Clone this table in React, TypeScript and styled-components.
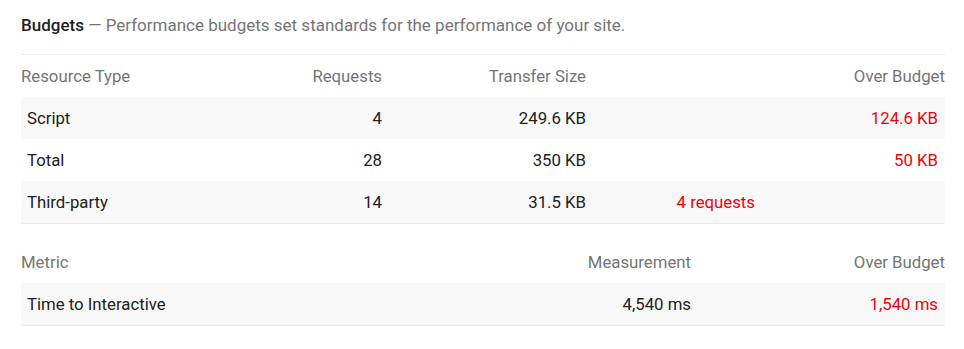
import { ReactElement } from 'react';
import styled, { createGlobalStyle } from 'styled-components';

const GlobalStyle = createGlobalStyle`
    body {
        margin: 0;
        background: #fff;
        font-family: Roboto, 'Liberation Sans', Arial, sans-serif;
        -webkit-font-smoothing: antialiased;
    }
`;

const Section = styled.div`
    width: 924px;
    padding: 13px 19px 0 21px;
`;

const Title = styled.div`
    font-size: 17px;
    line-height: 24px;
    color: #757575;
    padding-bottom: 17px;
    border-bottom: 1px solid #ebebeb;

    strong {
        font-weight: 500;
        color: #212121;
    }
`;

const Table = styled.table`
    width: 100%;
    border-collapse: collapse;
    table-layout: fixed;
    font-size: 16.75px;
    line-height: 24px;

    & + & {
        margin-top: 17px;
    }
`;

type Align = 'left' | 'right';

const HeadCell = styled.th<{ $align: Align }>`
    height: 42px;
    padding: 0 8px;
    font-weight: 400;
    color: #757575;
    text-align: ${(p) => p.$align};
    white-space: nowrap;

    &:first-child {
        padding-left: 0;
    }
    &:last-child {
        padding-right: 0;
    }
`;

const Row = styled.tr`
    &:nth-child(odd) {
        background-color: #f8f8f8;
    }
    &:last-child {
        border-bottom: 1px solid #ebebeb;
    }
`;

const Cell = styled.td<{ $align: Align; $over?: boolean }>`
    height: 42px;
    padding: 0 8px;
    color: ${(p) => (p.$over ? '#f0000a' : '#212121')};
    text-align: ${(p) => p.$align};
    white-space: nowrap;

    &:first-child {
        padding-left: 6px;
    }
    &:last-child {
        padding-right: 7px;
    }
`;

interface Column {
    label: string;
    width: number;
    align: Align;
    over?: boolean;
}

const resourceColumns: Column[] = [
    { label: 'Resource Type', width: 179, align: 'left' },
    { label: 'Requests', width: 190, align: 'right' },
    { label: 'Transfer Size', width: 204, align: 'right' },
    { label: '', width: 169, align: 'right', over: true },
    { label: 'Over Budget', width: 182, align: 'right', over: true },
];

const resourceRows = [
    ['Script', '4', '249.6 KB', '', '124.6 KB'],
    ['Total', '28', '350 KB', '', '50 KB'],
    ['Third-party', '14', '31.5 KB', '4 requests', ''],
];

const metricColumns: Column[] = [
    { label: 'Metric', width: 470, align: 'left' },
    { label: 'Measurement', width: 208, align: 'right' },
    { label: 'Over Budget', width: 246, align: 'right', over: true },
];

const metricRows = [['Time to Interactive', '4,540 ms', '1,540 ms']];

function BudgetTable({ columns, rows }: { columns: Column[]; rows: string[][] }): ReactElement {
    return (
        <Table>
            <colgroup>
                {columns.map((c, i) => (
                    <col key={i} style={{ width: c.width }} />
                ))}
            </colgroup>
            <thead>
                <tr>
                    {columns.map((c, i) => (
                        <HeadCell key={i} $align={c.align}>
                            {c.label}
                        </HeadCell>
                    ))}
                </tr>
            </thead>
            <tbody>
                {rows.map((row, r) => (
                    <Row key={r}>
                        {row.map((value, i) => (
                            <Cell key={i} $align={columns[i].align} $over={columns[i].over}>
                                {value}
                            </Cell>
                        ))}
                    </Row>
                ))}
            </tbody>
        </Table>
    );
}

function App(): ReactElement {
    return (
        <>
            <GlobalStyle />
            <Section>
                <Title>
                    <strong>Budgets</strong> — Performance budgets set standards for the performance of your site.
                </Title>
                <BudgetTable columns={resourceColumns} rows={resourceRows} />
                <BudgetTable columns={metricColumns} rows={metricRows} />
            </Section>
        </>
    );
}

export default App;
